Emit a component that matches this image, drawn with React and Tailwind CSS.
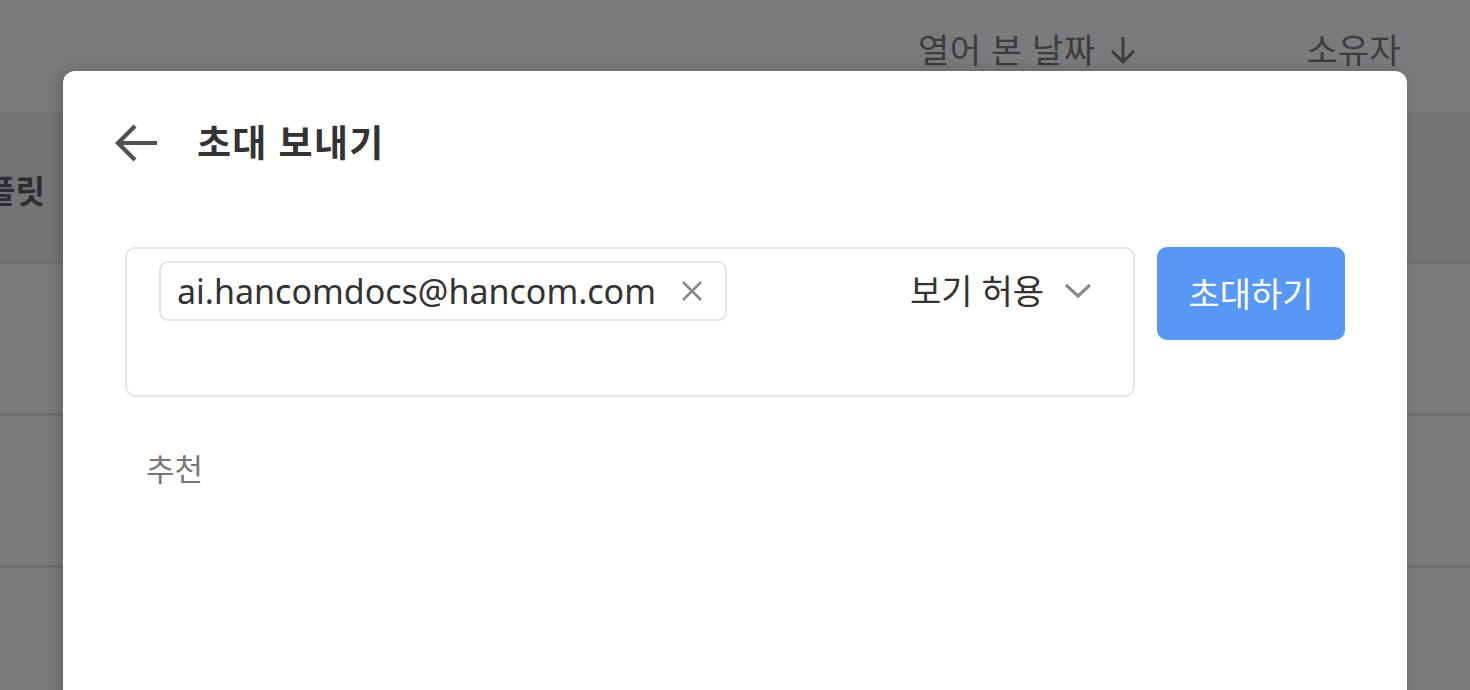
import React from "react";

const font = { fontFamily: '"Noto Sans", "Noto Sans CJK KR", sans-serif' };

function BackArrow() {
  return (
    <svg width="46" height="46" viewBox="0 0 46 46" fill="none">
      <path d="M44 23H6M22 6L5 23l17 17" stroke="#505050" strokeWidth="4.2" strokeLinecap="butt" strokeLinejoin="miter" />
    </svg>
  );
}

function XIcon() {
  return (
    <svg width="22" height="22" viewBox="0 0 22 22" fill="none">
      <path d="M2 2l18 18M20 2L2 20" stroke="#8a8a8a" strokeWidth="2.6" />
    </svg>
  );
}

function Chevron() {
  return (
    <svg width="28" height="16" viewBox="0 0 28 16" fill="none">
      <path d="M2 2l12 11L26 2" stroke="#8a8a8a" strokeWidth="3.2" />
    </svg>
  );
}

export default function App() {
  return (
    <div className="relative w-[1470px] h-[690px] overflow-hidden bg-[#7b7b7d]" style={font}>
      {/* background page (dimmed) */}
      <div className="flex flex-col">
        <div className="h-[112px] flex items-start pt-[27px] text-[34px] text-[#3c3c3e]">
          <div className="ml-[918px] flex items-center gap-[14px] leading-[46px] tracking-[0.5px]">
            <span>열어 본 날짜</span>
            <svg width="26" height="30" viewBox="0 0 26 30" fill="none">
              <path d="M13 2v25M2 16l11 11 11-11" stroke="#3c3c3e" strokeWidth="3" />
            </svg>
          </div>
          <span className="ml-[171px] leading-[46px]">소유자</span>
        </div>
        <div className="h-[152px] bg-[#757577] border-b-[3px] border-[#6f6f71] flex items-start pt-[57px] overflow-hidden">
          <span className="ml-[-14px] text-[32px] font-bold text-[#2e2e30] leading-[44px] whitespace-nowrap">플릿</span>
        </div>
        <div className="h-[152px] border-b-[3px] border-[#6f6f71]" />
        <div className="h-[152px] border-b-[3px] border-[#6f6f71]" />
        <div className="h-[140px]" />
      </div>

      {/* modal */}
      <div className="absolute left-[63px] top-[71px] w-[1344px] h-[700px] bg-white rounded-[12px] shadow-[-4px_0_14px_rgba(0,0,0,0.18)] flex flex-col">
        <div className="flex items-center pl-[50px] pt-[49px] h-[95px]">
          <BackArrow />
          <span className="ml-[38px] text-[37px] font-bold text-[#333333] leading-[48px] tracking-[1.3px]">초대 보내기</span>
        </div>
        <div className="flex items-start pl-[62px] mt-[81px] gap-[22px]">
          <div className="w-[1010px] h-[150px] border-2 border-[#e6e6e6] rounded-[10px] flex items-start justify-between pt-[12px] pl-[32px] pr-[41px]">
            <div className="h-[60px] w-[568px] border-2 border-[#e6e6e6] rounded-[9px] flex items-center justify-between pl-[16px] pr-[22px]">
              <span className="text-[34px] text-[#333333] leading-[44px]">ai.hancomdocs@hancom.com</span>
              <XIcon />
            </div>
            <div className="h-[60px] flex items-center gap-[20px]">
              <span className="text-[34px] text-[#333333] leading-[44px]">보기 허용</span>
              <Chevron />
            </div>
          </div>
          <button className="w-[188px] h-[93px] rounded-[10px] bg-[#5797f6] text-white text-[34px] leading-[44px] flex items-center justify-center">
            초대하기
          </button>
        </div>
        <div className="pl-[83px] mt-[52px] text-[31px] text-[#777777] leading-[40px]">추천</div>
      </div>
    </div>
  );
}
